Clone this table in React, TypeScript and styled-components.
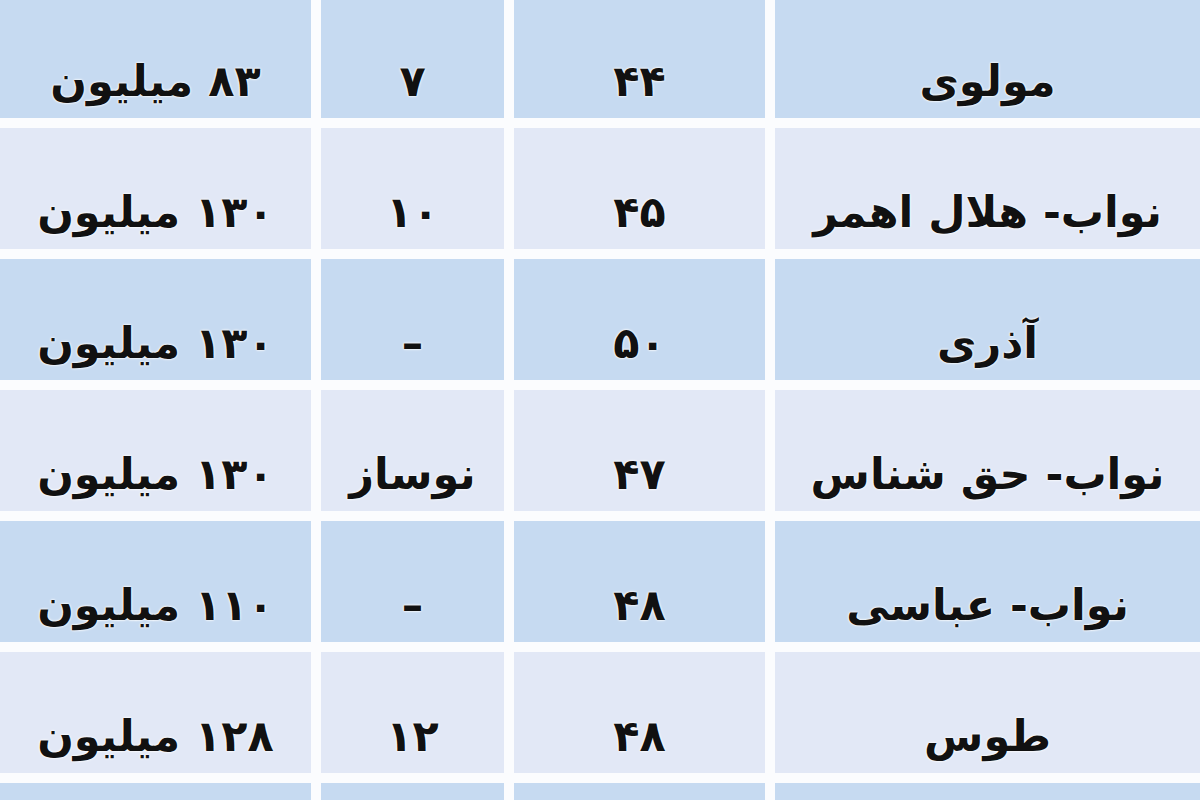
import * as React from "react";
import styled, { createGlobalStyle } from "styled-components";

const GlobalStyle = createGlobalStyle`
  html, body {
    margin: 0;
    padding: 0;
    background: #fbfcfe;
    overflow: hidden;
  }
`;

const ScTable = styled.div`
  display: grid;
  direction: rtl;
  grid-template-columns: 1fr 251px 183px 311px;
  grid-auto-rows: 121px;
  gap: 10px;
  width: 1200px;
  height: 803px;
  overflow: hidden;
  margin-top: -3px;
  background-color: #fbfcfe;
  font-family: "DejaVu Sans", "Noto Sans", sans-serif;
  font-weight: bold;
`;

const ScCell = styled.div<{ $shade: "blue" | "pale" }>`
  display: flex;
  align-items: center;
  justify-content: center;
  padding-top: 46px;
  box-sizing: border-box;
  background-color: ${(p) => (p.$shade === "blue" ? "#c6daf1" : "#e2e8f6")};
  color: #111111;
  font-size: 43px;
  white-space: nowrap;
  text-shadow: 0 0 3px #ffffff, 0 0 2px #ffffff, 0 0 1px #ffffff;
`;

const rows: string[][] = [
  ["مولوی", "۴۴", "۷", "۸۳ میلیون"],
  ["نواب- هلال اهمر", "۴۵", "۱۰", "۱۳۰ میلیون"],
  ["آذری", "۵۰", "–", "۱۳۰ میلیون"],
  ["نواب- حق شناس", "۴۷", "نوساز", "۱۳۰ میلیون"],
  ["نواب- عباسی", "۴۸", "–", "۱۱۰ میلیون"],
  ["طوس", "۴۸", "۱۲", "۱۲۸ میلیون"],
  ["", "", "", ""],
];

export default function App(): JSX.Element {
  return (
    <>
      <GlobalStyle />
      <ScTable>
        {rows.map((row, i) =>
          row.map((text, j) => (
            <ScCell key={`${i}-${j}`} $shade={i % 2 === 0 ? "blue" : "pale"}>
              {text}
            </ScCell>
          ))
        )}
      </ScTable>
    </>
  );
}
